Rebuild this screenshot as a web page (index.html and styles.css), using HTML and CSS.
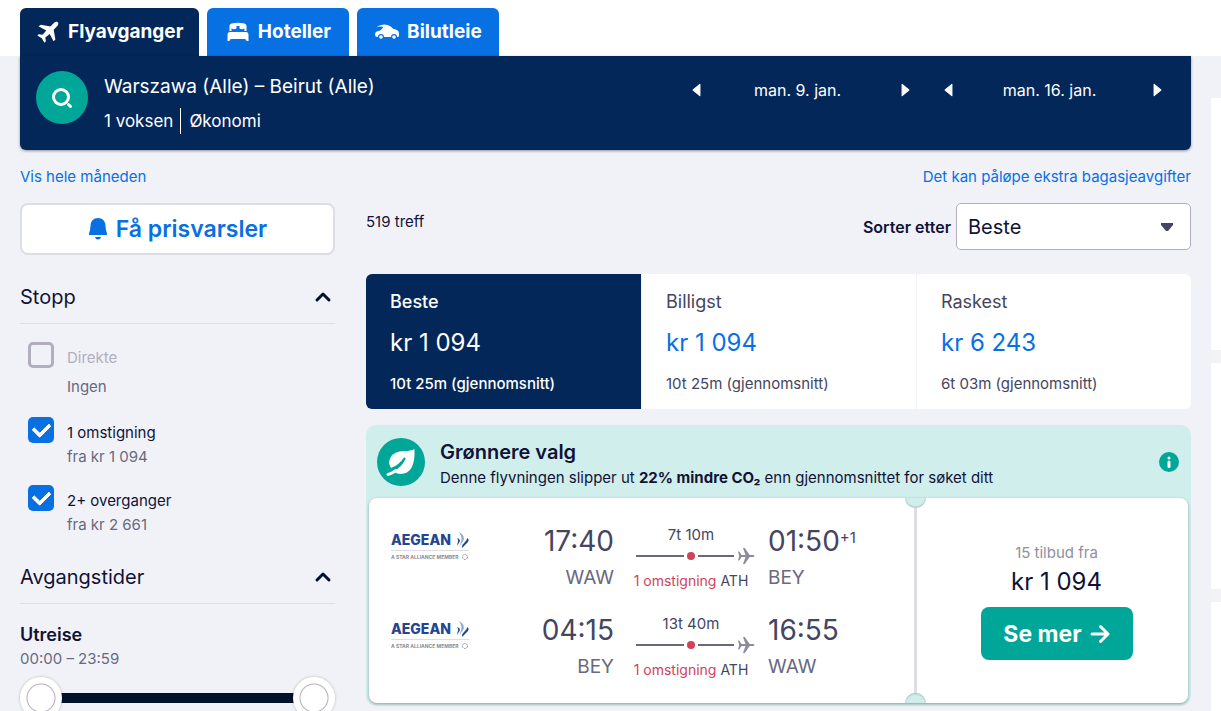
FILE: index.html
```html
<!DOCTYPE html>
<html lang="no">
<head>
<meta charset="utf-8">
<title>Warszawa – Beirut</title>
<link rel="stylesheet" href="styles.css">
</head>
<body>
<svg class="sprite" aria-hidden="true">
  <symbol id="chevron" viewBox="0 0 18 12"><path d="M3 9l6-6 6 6" fill="none" stroke="currentColor" stroke-width="3" stroke-linecap="round" stroke-linejoin="round"/></symbol>
  <symbol id="flight" viewBox="0 0 18 18"><path d="M1 4.500h1.200l2.300 3.400h4L6 1h1.700l5 6.900H16q1.500.1 1.500 1.100T16 10.100h-3.300l-5 6.900H6l2.500-6.900h-4l-2.300 3.400H1L2.200 9z"/></symbol>
  <symbol id="wing" viewBox="0 0 78 32">
    <path d="M68 1q7 4 4 9l-4 6q3-7 2.500-9.500T68 1z" fill="#8aa6d3"/>
    <path d="M66 7q4 1 2.500 4L66 15q.5-3 1-4.500T66 7zM76 7q3 1.500.5 4.500L71 17q-.5-3 2.500-5.500T76 7z" fill="#26458f"/>
    <path d="M0 19.500h78" stroke="#dcdce2"/>
    <circle cx="74" cy="26" r="2.500" fill="none" stroke="#8b8b90" stroke-dasharray="2 1"/>
  </symbol>
</svg>

<header class="top">
  <nav class="tabs">
    <a class="tab tab-active" href="#fly"><svg class="tab-icon" viewBox="0 0 24 24"><path d="M21.800 2.200c-.9-.9-2.700-.5-3.700.5l-3.700 3.700L5 4.700 2.500 6.200l7.800 4.200-3.700 4.400-3.800-.6L1.300 15.500l4.500 2.700L8.400 22.700l1.500-1.500-.6-3.700 4.400-3.600 3.900 7.300 1.800-1.800-1.700-9.700 3.600-3.700c1-1 1.400-2.900.5-3.800z"/></svg>Flyavganger</a>
    <a class="tab" href="#hotell"><svg class="tab-icon" viewBox="0 0 24 24"><path d="M3.500 11V6q0-2 2-2.500Q12 2 18.500 3.500q2 .5 2 2.500v5h-2V8.500q-2.500 1.500-5 0V6h-3v2.500q-2.500 1.500-5 0V11zM4 12h16q2.500 0 2.500 3v6h-2q0-2-2-2h-13q-2 0-2 2h-2v-6q0-3 2.500-3z"/></svg>Hoteller</a>
    <a class="tab" href="#bil"><svg class="tab-icon" viewBox="0 0 24 24"><path d="M1 7.500Q7 3 12.500 5q3.500 1 6 4 5.500.5 5.500 4.500V16q0 1-2 1a3 3 0 0 0-6 0H9a3 3 0 0 0-6 0q-3 0-3-2.500Q0 11 4 11q2.500-1 4.500-4Q5 6 1 7.500z"/><circle cx="6" cy="17" r="1.800"/><circle cx="19" cy="17" r="1.800"/></svg>Bilutleie</a>
  </nav>
</header>

<div class="page">
  <main class="main">
    <section class="search">
      <button class="search-button" aria-label="Søk"><svg class="search-icon" viewBox="0 0 24 24"><circle cx="11" cy="11" r="7.500"/><path d="M18.500 18.500l2 2"/></svg></button>
      <div class="search-text">
        <div class="route">Warszawa (Alle) – Beirut (Alle)</div>
        <div class="travellers"><span>1 voksen</span><span class="cabin">Økonomi</span></div>
      </div>
      <div class="dates">
        <div class="date"><button class="step" aria-label="Forrige dag"><svg class="step-icon" viewBox="0 0 8 12"><path d="M7 1v10L1 6z"/></svg></button><span class="day">man. 9. jan.</span><button class="step" aria-label="Neste dag"><svg class="step-icon" viewBox="0 0 8 12"><path d="M1 1v10l6-5z"/></svg></button></div>
        <div class="date"><button class="step" aria-label="Forrige dag"><svg class="step-icon" viewBox="0 0 8 12"><path d="M7 1v10L1 6z"/></svg></button><span class="day">man. 16. jan.</span><button class="step" aria-label="Neste dag"><svg class="step-icon" viewBox="0 0 8 12"><path d="M1 1v10l6-5z"/></svg></button></div>
      </div>
    </section>

    <div class="links"><a href="#maaned">Vis hele måneden</a><a href="#bagasje">Det kan påløpe ekstra bagasjeavgifter</a></div>

    <div class="columns">
      <aside class="filters">
        <button class="alert"><svg class="bell" viewBox="0 0 20 24"><path d="M10 1q7 0 7.500 8 .3 5 1.500 7.500.5 1.500-1 1.500H2q-1.500 0-1-1.500Q2.200 14 2.500 9 3 1 10 1zM7 20h6q-.5 2.500-3 2.500T7 20z"/></svg>Få prisvarsler</button>

        <button class="group">Stopp<svg class="chevron"><use href="#chevron"/></svg></button>
        <div class="options">
          <div class="option option-off"><input class="tick" type="checkbox" id="direct" disabled><label for="direct">Direkte</label><span class="note">Ingen</span></div>
          <div class="option"><input class="tick" type="checkbox" id="one" checked><label for="one">1 omstigning</label><span class="note">fra kr 1 094</span></div>
          <div class="option"><input class="tick" type="checkbox" id="two" checked><label for="two">2+ overganger</label><span class="note">fra kr 2 661</span></div>
        </div>

        <button class="group">Avgangstider<svg class="chevron"><use href="#chevron"/></svg></button>
        <div class="times">
          <h3 class="times-title">Utreise</h3>
          <div class="times-range">00:00 – 23:59</div>
          <div class="slider"><input class="range" type="range" aria-label="Tidligste avgang" min="0" max="100" value="0"><input class="range" type="range" aria-label="Seneste avgang" min="0" max="100" value="100"></div>
        </div>
      </aside>

      <section class="results">
        <div class="toolbar">
          <span class="count">519 treff</span>
          <label class="sort-label" for="sort">Sorter etter</label>
          <span class="sort-box"><select class="sort" id="sort"><option>Beste</option><option>Billigst</option><option>Raskest</option></select><svg class="caret" viewBox="0 0 14 10"><path d="M1 1h12v2L8 9H6L1 3z"/></svg></span>
        </div>

        <div class="ranking">
          <button class="rank rank-active"><span class="rank-name">Beste</span><span class="rank-price">kr 1 094</span><span class="rank-time">10t 25m (gjennomsnitt)</span></button>
          <button class="rank"><span class="rank-name">Billigst</span><span class="rank-price">kr 1 094</span><span class="rank-time">10t 25m (gjennomsnitt)</span></button>
          <button class="rank"><span class="rank-name">Raskest</span><span class="rank-price">kr 6 243</span><span class="rank-time">6t 03m (gjennomsnitt)</span></button>
        </div>

        <article class="green">
          <div class="green-head">
            <svg class="leaf" viewBox="0 0 48 48"><circle cx="24" cy="24" r="24" fill="#00a698"/><path d="M37.500 11q1 25-14 25-3 0-7-2.500 8-4 12-12.500.5-2-1.500-1.500Q22 27 14 30 10.500 25 13.500 19.500 17 13 27 13q7 0 10.500-2z" fill="#fff"/><path d="M11 36.500Q15 35.500 19 32.500" fill="none" stroke="#fff" stroke-width="3" stroke-linecap="round"/></svg>
            <div class="green-text">
              <h2 class="green-title">Grønnere valg</h2>
              <p class="green-note">Denne flyvningen slipper ut <b>22% mindre CO₂</b> enn gjennomsnittet for søket ditt</p>
            </div>
            <button class="info" aria-label="Mer informasjon"><svg class="info-icon" viewBox="0 0 20 20"><circle cx="10" cy="10" r="10" fill="#00a698"/><circle cx="10" cy="6" r="1.500" fill="#fff"/><path d="M10 10v4.500" stroke="#fff" stroke-width="3" stroke-linecap="round"/></svg></button>
          </div>
          <div class="ticket">
            <div class="legs">
              <div class="leg">
                <svg class="logo" viewBox="0 0 78 32"><text class="airline-name" x="0" y="14">AEGEAN</text><text class="airline-group" x="0" y="28">A STAR ALLIANCE MEMBER</text><use href="#wing"/></svg>
                <div class="stop stop-from"><div class="clock">17:40</div><div class="airport">WAW</div></div>
                <div class="path"><div class="duration">7t 10m</div><div class="line"><i class="bar bar-first"></i><i class="dot"></i><i class="bar"></i><svg class="flight"><use href="#flight"/></svg></div><div class="via"><span class="via-count">1 omstigning</span> ATH</div></div>
                <div class="stop"><div class="clock">01:50<span class="plus">+1</span></div><div class="airport">BEY</div></div>
              </div>
              <div class="leg">
                <svg class="logo" viewBox="0 0 78 32"><text class="airline-name" x="0" y="14">AEGEAN</text><text class="airline-group" x="0" y="28">A STAR ALLIANCE MEMBER</text><use href="#wing"/></svg>
                <div class="stop stop-from"><div class="clock">04:15</div><div class="airport">BEY</div></div>
                <div class="path"><div class="duration">13t 40m</div><div class="line"><i class="bar bar-first"></i><i class="dot"></i><i class="bar"></i><svg class="flight"><use href="#flight"/></svg></div><div class="via"><span class="via-count">1 omstigning</span> ATH</div></div>
                <div class="stop"><div class="clock">16:55</div><div class="airport">WAW</div></div>
              </div>
            </div>
            <div class="offer">
              <i class="notch notch-top"></i><i class="notch notch-bottom"></i>
              <div class="offer-count">15 tilbud fra</div>
              <div class="offer-price">kr 1 094</div>
              <button class="more">Se mer<svg class="arrow" viewBox="0 0 20 20"><path d="M2 10h15M10.500 2.500L18 10l-7.500 7.500"/></svg></button>
            </div>
          </div>
        </article>
      </section>
    </div>
  </main>
  <aside class="ads" aria-label="Annonser"><div class="ad ad-tall"></div><div class="ad"></div><div class="ad"></div></aside>
</div>
</body>
</html>
```
FILE: styles.css
```css
* { box-sizing: border-box; }
html { scrollbar-width: none; }
body { margin: 0; background: #f1f2f8; color: #111236; font: 15px/24px Inter, "Liberation Sans", sans-serif; }
button { border: 0; padding: 0; margin: 0; background: none; font: inherit; color: inherit; cursor: pointer; }
a { color: #0770e3; text-decoration: none; }
h2, h3, p { margin: 0; }
.sprite { position: absolute; width: 0; height: 0; }

.top { background: #fff; padding: 8px 20px 0; }
.tabs { display: flex; gap: 8px; }
.tab { display: flex; align-items: center; justify-content: center; gap: 8px; min-width: 142px; height: 48px; padding: 0 16px; border-radius: 6px 6px 0 0; background: #0770e3; color: #fff; font-size: 19px; font-weight: 700; }
.tab-active { background: #042759; }
.tab-icon { width: 24px; height: 24px; fill: currentColor; }

.page { display: grid; grid-template-columns: minmax(0, 1fr) 10px; }
.main { padding: 0 20px; }
.ads { display: flex; flex-direction: column; gap: 13px; padding-top: 42px; }
.ad { height: 226px; background: #fff; box-shadow: 0 13px #f3f3f5; }
.ad-tall { height: 252px; }

.search { display: flex; align-items: flex-start; min-height: 94px; padding: 15px 14px 12px 16px; background: #042759; color: #fff; border-radius: 0 0 6px 6px; box-shadow: 0 1px 3px #0006; }
.search-button { display: grid; place-items: center; width: 52px; height: 53px; border-radius: 50%; background: #00a698; }
.search-icon { width: 24px; height: 24px; fill: none; stroke: #fff; stroke-width: 3; stroke-linecap: round; }
.search-text { flex: 1; padding-left: 16px; }
.route { font-size: 19px; line-height: 32px; }
.travellers { display: flex; align-items: center; font-size: 17px; line-height: 26px; margin-top: 5px; }
.cabin { border-left: 1px solid #fff; margin-left: 7px; padding-left: 8px; }
.dates { display: flex; gap: 3px; }
.date { display: flex; align-items: center; width: 249px; height: 38px; }
.step { display: grid; place-items: center; width: 40px; height: 38px; }
.step-icon { width: 9px; height: 14px; fill: #fff; stroke: #fff; stroke-linejoin: round; }
.day { flex: 1; padding-right: 6px; text-align: center; font-size: 16px; }

.links { display: flex; justify-content: space-between; margin: 15px 0 14px; }
.columns { display: grid; grid-template-columns: 315px minmax(0, 1fr); gap: 31px; }

.alert { display: flex; align-items: center; justify-content: center; gap: 8px; width: 100%; height: 52px; border: 2px solid #dddde5; border-radius: 8px; background: #fff; color: #0770e3; font-size: 23px; font-weight: 600; }
.bell { width: 20px; height: 24px; fill: currentColor; }
.group { display: flex; align-items: center; justify-content: space-between; width: 100%; height: 53px; margin-top: 16px; padding-right: 3px; border-bottom: 1px solid #dddde5; font-size: 20px; }
.chevron { width: 18px; height: 12px; color: #02122c; }
.options { display: grid; padding-left: 8px; }
.option { display: grid; grid-template-columns: 26px 1fr; column-gap: 13px; align-items: start; height: 68px; padding-top: 18px; }
.option-off { height: 75px; }
.option label { padding-top: 4px; }
.option-off label { color: #b2aebd; }
.note { grid-column: 2; color: #68697f; }
.option-off .note { padding-top: 5px; }
.tick { appearance: none; grid-row: 1 / 3; width: 26px; height: 26px; margin: 0; border: 3px solid #b2aebd; border-radius: 5px; }
.tick:checked { display: grid; place-items: center; border: 0; background: #0770e3; }
.tick:checked::after { content: ""; width: 13px; height: 8px; margin-bottom: 4px; border: solid #fff; border-width: 0 0 4px 4px; border-radius: 2px; transform: rotate(-45deg); }
.times { padding-top: 19px; }
.times-title { font-size: 18px; line-height: 24px; font-weight: 600; }
.times-range { color: #68697f; }
.slider { position: relative; height: 42px; margin-top: 6px; background: linear-gradient(#02122c, #02122c) center / 240px 10px no-repeat; }
.range { appearance: none; position: absolute; inset: 0; width: 100%; height: 42px; margin: 0; background: none; pointer-events: none; }
.range::-webkit-slider-thumb { appearance: none; width: 42px; height: 42px; border-radius: 50%; background: radial-gradient(circle, #fff 13px, #b2aebd 14px, #fff 15px); box-shadow: 0 0 3px #0004; pointer-events: auto; }

.toolbar { display: flex; align-items: center; height: 47px; }
.count { flex: 1; padding-bottom: 10px; }
.sort-label { font-size: 16px; font-weight: 600; margin-right: 5px; }
.sort-box { position: relative; width: 235px; }
.sort { appearance: none; display: block; width: 100%; height: 47px; padding: 0 11px; border: 1px solid #b2aebd; border-radius: 5px; background: #fff; color: #111236; font: 20px/24px Inter, "Liberation Sans", sans-serif; }
.caret { position: absolute; right: 17px; top: 19px; width: 14px; height: 10px; fill: #444560; pointer-events: none; }

.ranking { display: grid; grid-template-columns: repeat(3, 1fr); margin-top: 24px; border-radius: 6px; overflow: hidden; background: #fff; }
.rank { display: flex; flex-direction: column; align-items: flex-start; gap: 12px; height: 135px; padding: 16px 24px 13px; color: #444560; border-left: 1px solid #f1f2f8; }
.rank-active { background: #042759; color: #fff; border: 0; font-weight: 500; }
.rank-name { font-size: 18px; }
.rank-price { font-size: 24px; line-height: 34px; color: #0770e3; font-weight: 400; }
.rank-active .rank-price { color: #fff; }

.green { margin-top: 16px; padding: 0 3px 3px; border-radius: 10px; background: #d0eeec; }
.green-head { display: flex; align-items: center; height: 73px; padding: 0 9px 0 8px; }
.leaf { width: 48px; height: 48px; }
.green-text { flex: 1; padding-left: 15px; padding-top: 4px; }
.green-title { font-size: 20px; line-height: 28px; font-weight: 600; }
.info { width: 20px; height: 20px; }
.info-icon { display: block; width: 20px; height: 20px; }
.ticket { display: grid; grid-template-columns: minmax(0, 1fr) 274px; min-height: 205px; background: #fff; border-radius: 8px; box-shadow: 0 1px 3px #0005; }
.legs { padding-top: 23px; }
.leg { display: grid; grid-template-columns: 78px 1fr 128px 133px; column-gap: 13px; height: 89px; padding: 0 13px 0 22px; }
.logo { width: 78px; height: 32px; margin-top: 10px; }
.airline-name { font: 800 14px Inter, sans-serif; fill: #26458f; }
.airline-group { font: 700 5px Inter, sans-serif; fill: #8b8b90; }
.stop { color: #68697f; }
.stop-from { text-align: right; }
.clock { font-size: 28px; line-height: 40px; color: #444560; }
.plus { font-size: 15px; line-height: 16px; vertical-align: 8px; }
.airport { font-size: 19px; line-height: 34px; }
.path { display: flex; flex-direction: column; align-items: center; color: #444560; white-space: nowrap; }
.duration { line-height: 28px; }
.line { display: flex; align-items: center; width: 100%; height: 14px; padding-left: 9px; gap: 3px; }
.bar { flex: 3; height: 2px; background: #68697f; }
.bar-first { flex: 4; }
.dot { width: 8px; height: 8px; border-radius: 50%; background: #d1435b; }
.flight { width: 18px; height: 18px; fill: #8f8b9c; }
.via { margin-top: 6px; font-size: 14px; }
.via-count { color: #d1435b; }
.offer { position: relative; display: flex; flex-direction: column; align-items: center; padding: 43px 0 0 8px; border-left: 3px solid #dddde5; }
.notch { position: absolute; left: -12px; width: 21px; height: 10px; background: #d0eeec; }
.notch-top { top: 0; border-radius: 0 0 11px 11px; box-shadow: inset 0 -1px 2px #0003; }
.notch-bottom { bottom: 0; border-radius: 11px 11px 0 0; box-shadow: inset 0 1px 2px #0003; }
.offer-count { color: #8f90a0; }
.offer-price { font-size: 24px; line-height: 34px; }
.more { display: flex; align-items: center; justify-content: center; gap: 8px; width: 152px; height: 53px; margin-top: 8px; border-radius: 8px; background: #00a698; color: #fff; font-size: 23px; font-weight: 700; }
.arrow { width: 20px; height: 20px; fill: none; stroke: #fff; stroke-width: 3; stroke-linecap: round; stroke-linejoin: round; }
```
